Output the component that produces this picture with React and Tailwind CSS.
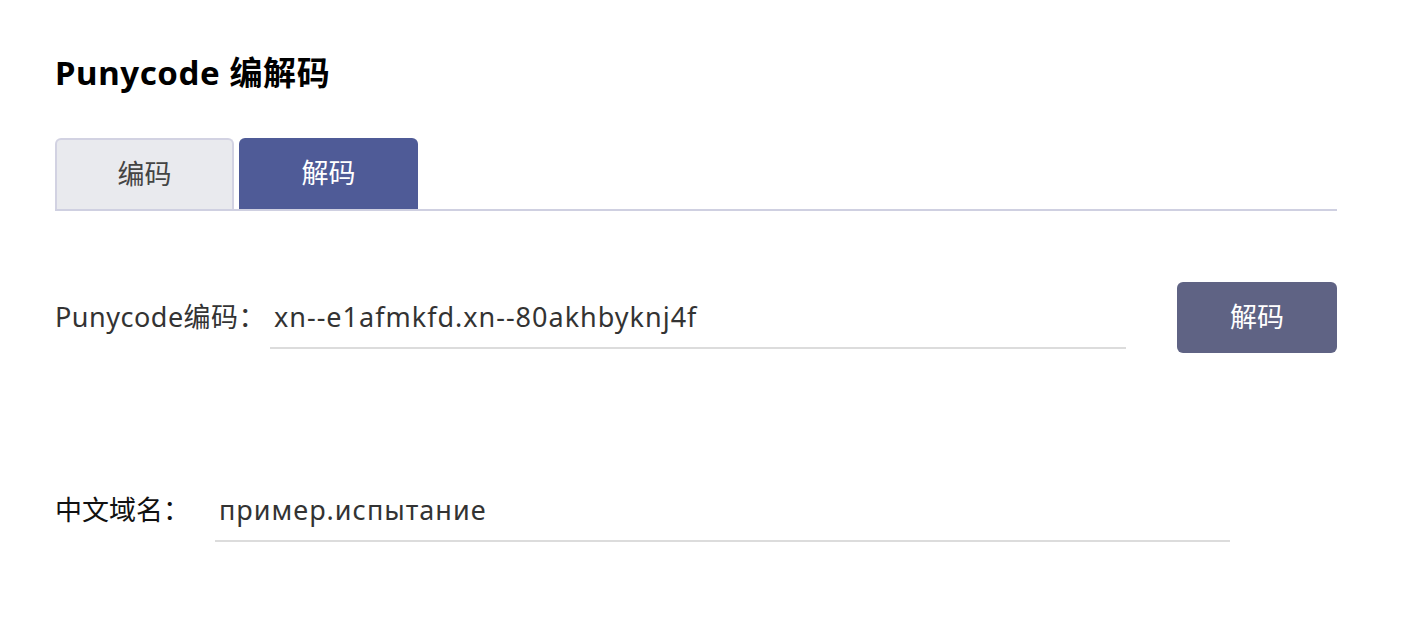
import React, { useState } from 'react';

const font = { fontFamily: '"Noto Sans", "Noto Sans CJK SC", sans-serif' };

export default function App() {
  const [tab, setTab] = useState('decode');

  return (
    <div className="min-h-[632px] bg-white pl-[55px] pr-[75px] pt-[50px]" style={font}>
      <h1 className="text-[33px] font-bold leading-[46px] tracking-[0.6px] text-black">Punycode 编解码</h1>

      {/* 标签页 */}
      <div className="mt-[42px] flex gap-[5px] border-b-2 border-[#cfd0e1]">
        <button
          onClick={() => setTab('encode')}
          className={`h-[71px] w-[179px] rounded-t-[6px] text-[27px] ${
            tab === 'encode'
              ? 'bg-[#4f5b97] text-white'
              : 'border-2 border-b-0 border-[#d2d2e2] bg-[#e9eaee] text-[#444]'
          }`}
        >
          编码
        </button>
        <button
          onClick={() => setTab('decode')}
          className={`h-[71px] w-[179px] rounded-t-[6px] text-[27px] ${
            tab === 'decode'
              ? 'bg-[#4f5b97] text-white'
              : 'border-2 border-b-0 border-[#d2d2e2] bg-[#e9eaee] text-[#444]'
          }`}
        >
          解码
        </button>
      </div>

      {/* Punycode 输入 */}
      <div className="mt-[71px] flex h-[71px] items-center">
        <label className="w-[215px] shrink-0 text-[27px] tracking-[0.5px] text-[#333]">Punycode编码：</label>
        <input
          defaultValue="xn--e1afmkfd.xn--80akhbyknj4f"
          className="h-[63px] w-[856px] border-b-2 border-[#dcdcdc] px-[4px] text-[27px] tracking-[1px] text-[#333] outline-none"
        />
        <button className="ml-auto h-[71px] w-[160px] rounded-[6px] bg-[#5f6384] text-[27px] text-white">
          解码
        </button>
      </div>

      {/* 中文域名 */}
      <div className="mt-[122px] flex h-[71px] items-center">
        <label className="w-[160px] shrink-0 text-[27px] text-[#111]">中文域名：</label>
        <input
          defaultValue="пример.испытание"
          className="h-[63px] w-[1015px] border-b-2 border-[#dcdcdc] px-[4px] text-[27px] tracking-[1px] text-[#333] outline-none"
        />
      </div>
    </div>
  );
}
